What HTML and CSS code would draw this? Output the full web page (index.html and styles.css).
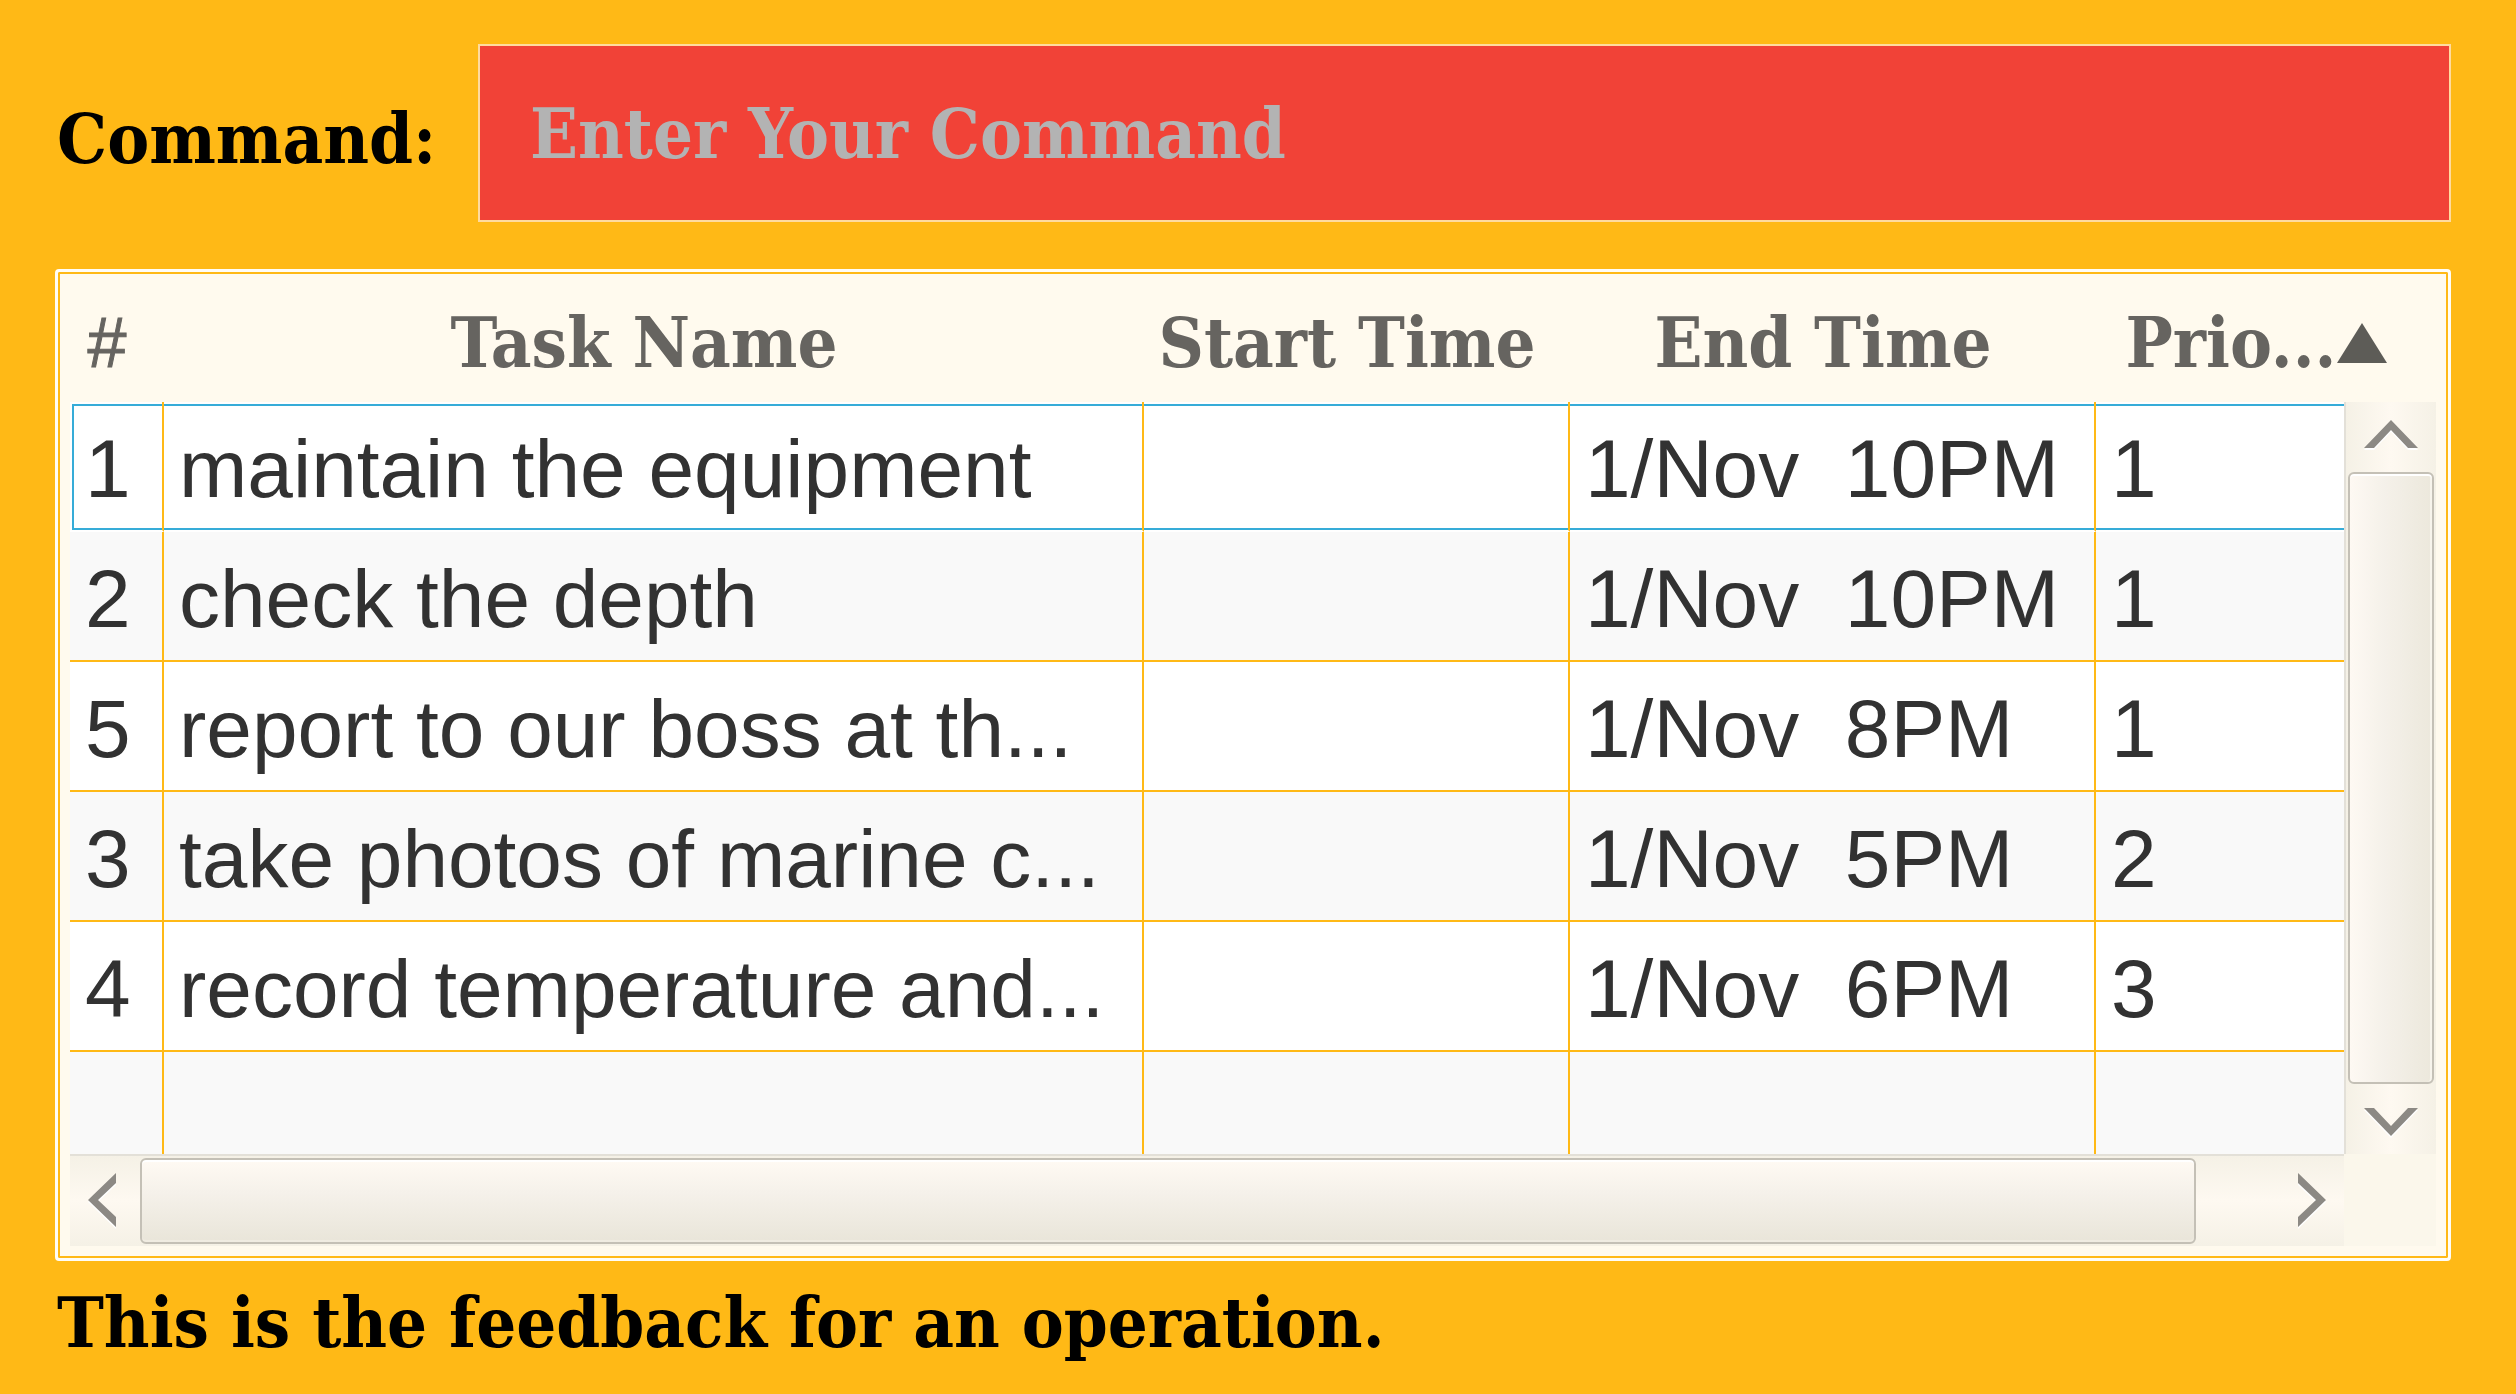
FILE: index.html
```html
<!DOCTYPE html>
<html lang="en">
<head>
<meta charset="utf-8">
<title>Tasks</title>
<link rel="stylesheet" href="styles.css">
</head>
<body>
<main class="app">
  <form class="command-bar">
    <label class="command-label" for="command">Command:</label>
    <input class="command-input" id="command" type="text" placeholder="Enter Your Command">
  </form>

  <section class="task-view">
    <table class="tasks">
      <colgroup>
        <col class="col-id"><col class="col-name"><col class="col-start"><col class="col-end"><col class="col-priority">
      </colgroup>
      <thead>
        <tr>
          <th class="plain" scope="col">#</th>
          <th scope="col">Task Name</th>
          <th scope="col">Start Time</th>
          <th scope="col">End Time</th>
          <th scope="col" aria-sort="ascending">
            <button class="sort" type="button">Prio...<svg width="50" height="40" viewBox="0 0 50 40" aria-hidden="true"><path d="M25 0 50 40H0Z" fill="#5d5c57"/></svg></button>
          </th>
        </tr>
      </thead>
      <tbody>
        <tr class="selected"><td>1</td><td>maintain the equipment</td><td></td><td>1/Nov  10PM</td><td>1</td></tr>
        <tr><td>2</td><td>check the depth</td><td></td><td>1/Nov  10PM</td><td>1</td></tr>
        <tr><td>5</td><td>report to our boss at th...</td><td></td><td>1/Nov  8PM</td><td>1</td></tr>
        <tr><td>3</td><td>take photos of marine c...</td><td></td><td>1/Nov  5PM</td><td>2</td></tr>
        <tr><td>4</td><td>record temperature and...</td><td></td><td>1/Nov  6PM</td><td>3</td></tr>
        <tr class="filler"><td></td><td></td><td></td><td></td><td></td></tr>
      </tbody>
    </table>

    <div class="scrollbar vertical">
      <button class="step up" type="button" aria-label="Scroll up"><svg width="54" height="30" viewBox="0 0 54 30"><path d="M0 30 27 2 54 30H44L27 12 10 30Z" fill="#fff"/><path d="M0 28 27 0 54 28H44L27 10 10 28Z" fill="#8c8984"/></svg></button>
      <div class="thumb"></div>
      <button class="step down" type="button" aria-label="Scroll down"><svg width="54" height="30" viewBox="0 0 54 30"><path d="M0 2 27 30 54 2H44L27 20 10 2Z" fill="#fff"/><path d="M0 0 27 28 54 0H44L27 18 10 0Z" fill="#8c8984"/></svg></button>
    </div>

    <div class="scrollbar horizontal">
      <button class="step left" type="button" aria-label="Scroll left"><svg width="28" height="56" viewBox="0 0 28 56"><path d="M28 2 0 29 28 56V46L10 29 28 12Z" fill="#fff"/><path d="M28 0 0 27 28 54V44L10 27 28 10Z" fill="#8c8984"/></svg></button>
      <div class="track"><div class="thumb"></div></div>
      <button class="step right" type="button" aria-label="Scroll right"><svg width="28" height="56" viewBox="0 0 28 56"><path d="M0 2 28 29 0 56V46L18 29 0 12Z" fill="#fff"/><path d="M0 0 28 27 0 54V44L18 27 0 10Z" fill="#8c8984"/></svg></button>
    </div>
    <div class="corner"></div>
  </section>

  <p class="feedback">This is the feedback for an operation.</p>
</main>
</body>
</html>
```
FILE: styles.css
```css
:root {
  --amber: #ffb916;
  --cream: #fffaee;
  --blue: #36acd8;
  --slab: "DejaVu Serif Condensed", "DejaVu Serif", serif;
  --sans: "Liberation Sans", Arial, sans-serif;
}

* { box-sizing: border-box; }

body {
  margin: 0;
  background: var(--amber);
  color: #000;
  font: bold 70px/84px var(--slab);
  font-stretch: condensed;
}

.app { padding: 44px 65px 0 55px; }

.command-bar {
  display: flex;
  align-items: center;
  justify-content: space-between;
  gap: 32px;
}

.command-label {
  flex: none;
  width: 391px;
  padding: 12px 0 0 2px;
  white-space: nowrap;
}

.command-input {
  flex: 1;
  min-width: 0;
  height: 178px;
  padding: 0 50px;
  border: 2px solid #ffdb9f;
  border-radius: 0;
  background: #f14237;
  color: #fff;
  font: inherit;
  outline: none;
}

.command-input::placeholder { color: #b3b3b3; opacity: 1; }

.task-view {
  display: grid;
  grid-template-columns: minmax(0, 1fr) 92px;
  grid-template-rows: 128px auto 92px;
  margin-top: 47px;
  padding: 2px 12px 12px;
  border: 3px solid #fffdf7;
  border-radius: 4px;
  background: var(--cream);
  box-shadow: inset 0 0 0 2px var(--amber);
}

.tasks {
  grid-area: 1 / 1 / 3 / 3;
  width: 100%;
  table-layout: fixed;
  border-collapse: separate;
  border-spacing: 0;
}

.col-id { width: 94px; }
.col-start { width: 426px; }
.col-end { width: 526px; }
.col-priority { width: 340px; }

th {
  height: 128px;
  padding: 10px 20px 0 0;
  color: #666460;
  font-weight: bold;
  white-space: nowrap;
}

th.plain {
  font: 70px/84px var(--sans);
  -webkit-text-stroke: 1px #666460;
}

.sort {
  display: inline-flex;
  align-items: center;
  padding: 0;
  border: 0;
  background: none;
  color: inherit;
  font: inherit;
}

td {
  height: 130px;
  padding: 6px 0 0 15px;
  overflow: hidden;
  border-right: 2px solid var(--amber);
  border-bottom: 2px solid var(--amber);
  background: #fff;
  color: #323232;
  font: 82px/92px var(--sans);
  white-space: pre;
}

td:last-child { border-right: 0; }
tr:nth-child(even) td { background: #f9f9f9; }

.selected td {
  border-bottom-color: #fff;
  background:
    linear-gradient(var(--blue), var(--blue)) 0 2px / 100% 2px no-repeat,
    linear-gradient(var(--blue), var(--blue)) 0 100% / 100% 2px no-repeat,
    #fff;
}

.selected td:first-child {
  background:
    linear-gradient(#fff, #fff) 0 0 / 2px 100% no-repeat,
    linear-gradient(#fff, #fff) 0 0 / 100% 2px no-repeat,
    linear-gradient(var(--blue), var(--blue)) 2px 0 / 2px 100% no-repeat,
    linear-gradient(var(--blue), var(--blue)) 0 2px / 100% 2px no-repeat,
    linear-gradient(var(--blue), var(--blue)) 0 100% / 100% 2px no-repeat,
    #fff;
}

.filler td { height: 102px; border-bottom: 0; }

.scrollbar { display: flex; z-index: 1; }

.vertical {
  grid-area: 2 / 2;
  flex-direction: column;
  border-left: 2px solid #e3e0d8;
  background: linear-gradient(90deg, #f5f1e6, #fef9f1 50%, #f5f1e6);
}

.horizontal {
  grid-area: 3 / 1;
  border-top: 2px solid #e3e0d8;
  background: linear-gradient(#f5f1e6, #fef9f1 50%, #f5f1e6);
}

.step {
  display: flex;
  flex: none;
  align-items: center;
  justify-content: center;
  padding: 0;
  border: 0;
  background: none;
}

.up, .down { height: 70px; }
.left, .right { width: 70px; }
.up { align-items: flex-start; padding-top: 18px; }
.down { align-items: flex-start; padding-top: 24px; }
.left { justify-content: flex-start; padding-left: 18px; }
.right { justify-content: flex-end; padding-right: 18px; }

.thumb {
  flex: 1;
  border: 2px solid #c4c0b6;
  border-radius: 6px;
}

.vertical .thumb {
  margin: 0 2px;
  background: linear-gradient(90deg, #fef9f3, #f5f1ea 40%, #ece8dc);
  box-shadow: inset 0 2px #fff, inset -2px 0 #f7f4ec;
}

.track { display: flex; flex: 1; padding: 2px 78px 2px 0; }

.horizontal .thumb {
  background: linear-gradient(#fffaf3, #f5f1ea 40%, #e9e5d9);
  box-shadow: inset 0 2px #fff, inset 0 -2px #f0ece2;
}

.corner { grid-area: 3 / 2; background: #fbf7eb; }

.feedback { margin: 20px 0 0; padding-left: 2px; }
```
